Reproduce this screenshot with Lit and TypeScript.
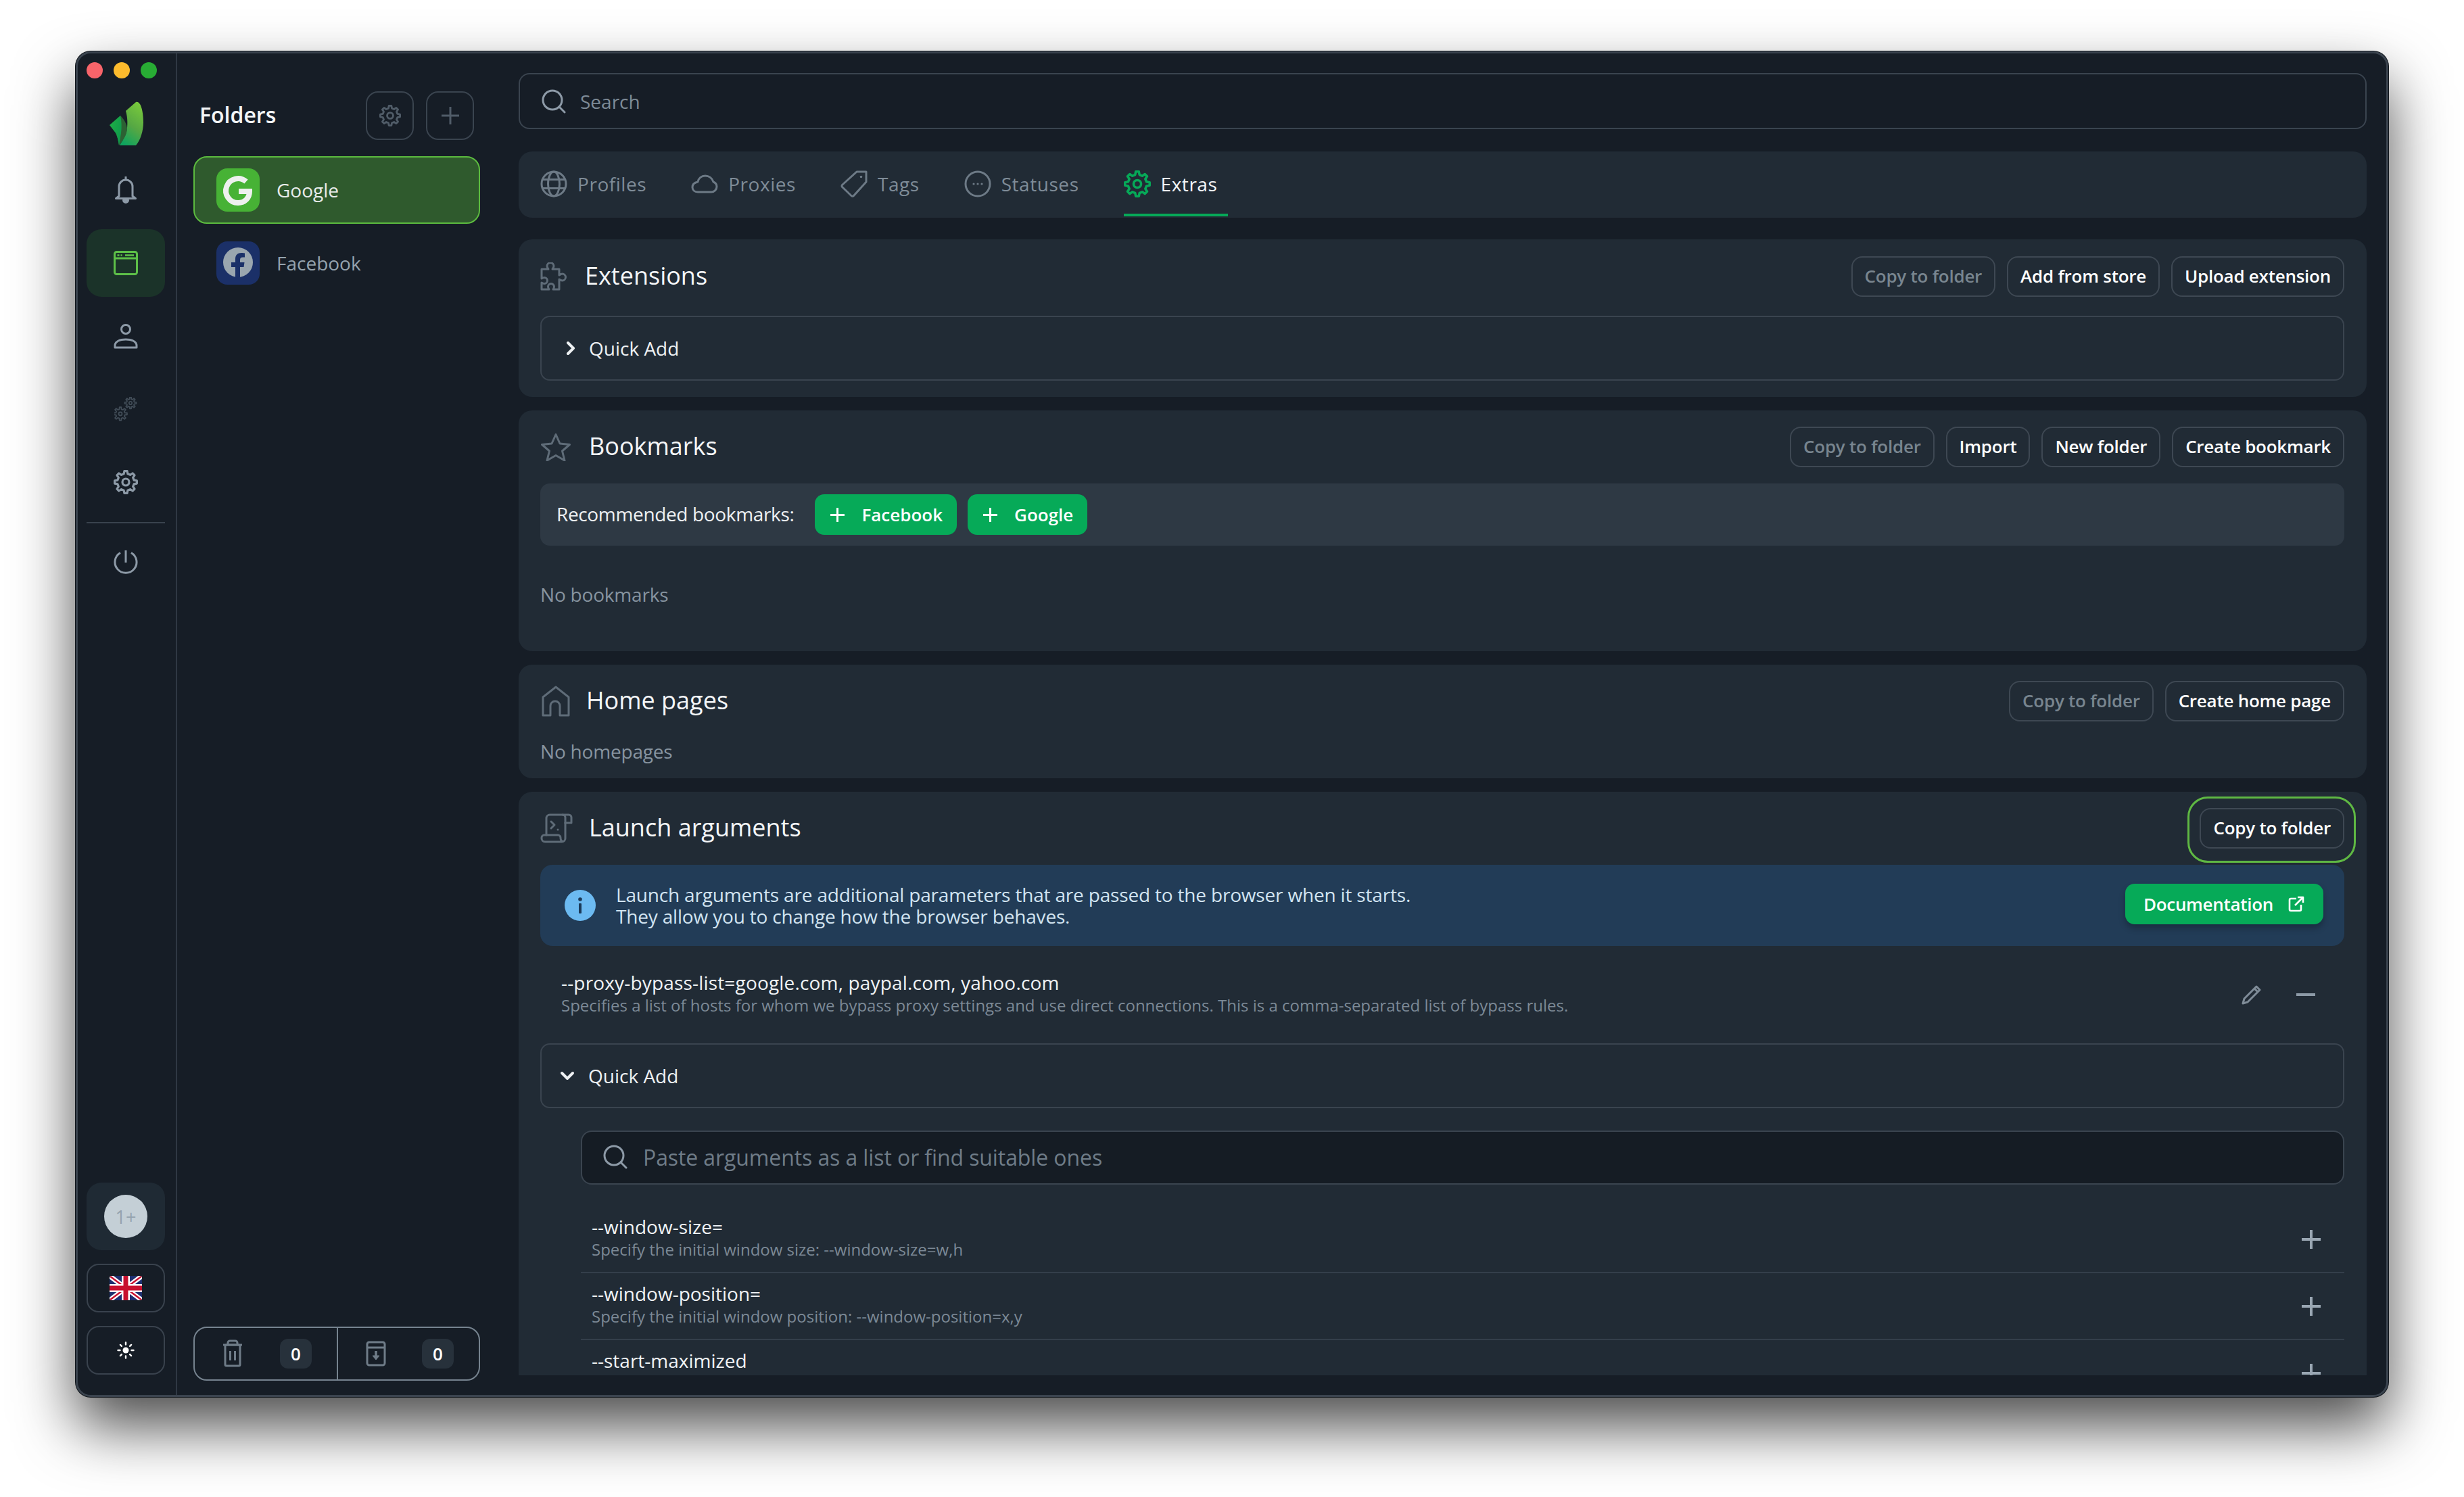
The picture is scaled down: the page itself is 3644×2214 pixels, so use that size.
import { LitElement, html, css } from 'lit';
import { customElement } from 'lit/decorators.js';
import { classMap } from 'lit/directives/class-map.js';

// cog outline, used by every gear icon in the app
function cog(cx: number, cy: number, ro: number, ri: number, teeth = 8) {
  const step = (Math.PI * 2) / teeth;
  let d = '';
  for (let i = 0; i < teeth; i++) {
    const a = i * step - Math.PI / 2;
    const pts: [number, number][] = [
      [ri, a - step * 0.3],
      [ro, a - step * 0.16],
      [ro, a + step * 0.16],
      [ri, a + step * 0.3],
    ];
    for (const [r, t] of pts) {
      d += `${i === 0 && t === pts[0][1] ? 'M' : 'L'}${(cx + r * Math.cos(t)).toFixed(2)} ${(cy + r * Math.sin(t)).toFixed(2)}`;
    }
  }
  return d + 'Z';
}

const gearIcon = (size: number) => html`<svg class="ic" width=${size} height=${size} viewBox="0 0 36 36" fill="none" stroke="currentColor" stroke-width="3.200" stroke-linejoin="round">
  <path d=${cog(18, 18, 16.5, 12.5)}></path><circle cx="18" cy="18" r="5"></circle>
</svg>`;

const plusIcon = (size: number, sw: number) => html`<svg class="ic" width=${size} height=${size} viewBox="0 0 ${size} ${size}" fill="none" stroke="currentColor" stroke-width=${sw}>
  <path d="M${size / 2} 0V${size}M0 ${size / 2}H${size}"></path>
</svg>`;

const searchIcon = (size: number) => html`<svg class="ic" width=${size} height=${size} viewBox="0 0 36 36" fill="none" stroke="currentColor" stroke-width="3" stroke-linecap="round">
  <circle cx="16" cy="16" r="14"></circle><path d="M26 26l8 8"></path>
</svg>`;

const chevronRight = html`<svg class="ic" width="14" height="22" viewBox="0 0 14 22" fill="none" stroke="currentColor" stroke-width="4" stroke-linecap="round" stroke-linejoin="round"><path d="M3 3l8 8-8 8"></path></svg>`;
const chevronDown = html`<svg class="ic" width="22" height="14" viewBox="0 0 22 14" fill="none" stroke="currentColor" stroke-width="4" stroke-linecap="round" stroke-linejoin="round"><path d="M3 3l8 8 8-8"></path></svg>`;

const navIcons = {
  bell: html`<svg class="ic" width="34" height="42" viewBox="0 0 34 42" fill="none" stroke="currentColor" stroke-width="3" stroke-linejoin="round">
    <path d="M17 1v4"></path><path d="M7 30V16a10 10 0 0 1 20 0v14l4.500 3.500H2.500z"></path><path d="M13.500 36a3.500 3.500 0 0 0 7 0z" fill="currentColor"></path>
  </svg>`,
  browser: html`<svg class="ic" width="36" height="36" viewBox="0 0 36 36" fill="none" stroke="currentColor" stroke-width="3">
    <rect x="1.500" y="1.500" width="33" height="33" rx="3"></rect><path d="M2 11h32"></path><path d="M5.500 6.500h3M10.500 6.500h2M17 6.500h13" stroke-width="2.500"></path>
  </svg>`,
  person: html`<svg class="ic" width="36" height="38" viewBox="0 0 36 38" fill="none" stroke="currentColor" stroke-width="3" stroke-linejoin="round">
    <circle cx="18" cy="9" r="6.500"></circle><path d="M2 36v-3c0-6 7-9 16-9s16 3 16 9v3z"></path>
  </svg>`,
  gears: html`<svg class="ic" width="34" height="36" viewBox="0 0 34 36" fill="none" stroke="currentColor" stroke-width="1.800" stroke-linejoin="round">
    <path d=${cog(24, 9, 8.5, 5.8)}></path><circle cx="24" cy="9" r="2.200"></circle>
    <path d=${cog(9, 25, 10, 6.800)}></path><circle cx="9" cy="25" r="2.500"></circle>
  </svg>`,
  gear: gearIcon(36),
  power: html`<svg class="ic" width="36" height="38" viewBox="0 0 36 38" fill="none" stroke="currentColor" stroke-width="3">
    <path d="M18 1v18"></path><path d="M10 4.500A16 16 0 1 0 26 4.500"></path>
  </svg>`,
};

const logo = html`<svg width="54" height="68" viewBox="0 0 54 68">
  <defs>
    <linearGradient id="lg1" x1="0.7" y1="0" x2="0.3" y2="1">
      <stop offset="0" stop-color="#78c83c"></stop><stop offset="0.55" stop-color="#55a744"></stop><stop offset="1" stop-color="#0fa45e"></stop>
    </linearGradient>
    <linearGradient id="lg2" x1="0" y1="0.2" x2="1" y2="0.8">
      <stop offset="0" stop-color="#1fae45"></stop><stop offset="1" stop-color="#0d9a4c"></stop>
    </linearGradient>
  </defs>
  <path fill="url(#lg1)" d="M41 2L26 15C29 25 29 38 27 46C25 54 20 60 17 66L41 66C48 58 52 44 52 32C52 20 50 10 47 5C45 2 43 1 41 2Z"></path>
  <path fill="#2c6233" d="M18 22C24 28 28 35 28 42C27 52 21 60 16 66C15 58 13 52 11 48Z"></path>
  <path fill="url(#lg2)" d="M18 22L2 36L12 49C14 55 15 60 16 66C17 60 18 54 19 48C20 40 20 30 18 22Z"></path>
</svg>`;

const flag = html`<svg class="flag" width="48" height="36" viewBox="0 0 48 36">
  <rect width="48" height="36" fill="#1d2f6f"></rect>
  <path d="M0 0L48 36M48 0L0 36" stroke="#fff" stroke-width="7"></path>
  <path d="M0 0L48 36M48 0L0 36" stroke="#c8102e" stroke-width="2.500"></path>
  <path d="M24 0V36M0 18H48" stroke="#fff" stroke-width="12"></path>
  <path d="M24 0V36M0 18H48" stroke="#c8102e" stroke-width="7"></path>
</svg>`;

const sun = html`<svg class="ic" width="26" height="26" viewBox="0 0 26 26" fill="#fff" stroke="#fff" stroke-width="2.400" stroke-linecap="round">
  <circle cx="13" cy="13" r="4.500" stroke="none"></circle>
  <path d="M13 1.500v3M13 21.500v3M1.500 13h3M21.500 13h3M4.900 4.900l2 2M19.100 19.100l2 2M21.100 4.900l-2 2M6.900 19.100l-2 2"></path>
</svg>`;

const trash = html`<svg class="ic" width="30" height="42" viewBox="0 0 30 42" fill="none" stroke="currentColor" stroke-width="3" stroke-linejoin="round">
  <path d="M1 8h28"></path><path d="M8 8V5a3 3 0 0 1 3-3h8a3 3 0 0 1 3 3v3"></path><rect x="4" y="8" width="22" height="31" rx="2"></rect><path d="M11.500 17v14M18.500 17v14"></path>
</svg>`;

const archive = html`<svg class="ic" width="30" height="38" viewBox="0 0 30 38" fill="none" stroke="currentColor" stroke-width="3" stroke-linejoin="round">
  <rect x="2" y="2" width="26" height="34" rx="3"></rect><path d="M2 10h26"></path><path d="M15 15v9" stroke-width="3.500"></path><path d="M10 22h10l-5 6z" fill="currentColor" stroke-width="1"></path>
</svg>`;

const tabIcons = {
  globe: html`<svg class="ic" width="40" height="40" viewBox="0 0 40 40" fill="none" stroke="currentColor" stroke-width="3"><circle cx="20" cy="20" r="18"></circle><ellipse cx="20" cy="20" rx="8.500" ry="18"></ellipse><path d="M3.500 13.500h33M3.500 26.500h33"></path></svg>`,
  cloud: html`<svg class="ic" width="40" height="28" viewBox="0 0 40 28" fill="none" stroke="currentColor" stroke-width="3" stroke-linejoin="round"><path d="M10 26H30a8 8 0 0 0 8-8c0-3-1.500-5.500-5-7C31 5 26 2 21 2C15 2 11 6 10 11C5 12 2 15 2 19c0 4 3 7 8 7Z"></path></svg>`,
  tag: html`<svg class="ic" width="40" height="40" viewBox="0 0 40 40" fill="none" stroke="currentColor" stroke-width="3" stroke-linejoin="round"><path d="M38 2H24L2.500 21.500Q1.500 23 2.500 24.500L16 37.500Q18 39 19.500 37.500L38 17Z"></path><circle cx="30.500" cy="9.500" r="1.800" fill="currentColor" stroke="none"></circle></svg>`,
  dots: html`<svg class="ic" width="40" height="40" viewBox="0 0 40 40" fill="none" stroke="currentColor" stroke-width="3"><circle cx="20" cy="20" r="18"></circle><g fill="currentColor" stroke="none"><circle cx="14" cy="20" r="1.600"></circle><circle cx="20" cy="20" r="1.600"></circle><circle cx="26" cy="20" r="1.600"></circle></g></svg>`,
  gear: gearIcon(40),
};

const cardIcons = {
  puzzle: html`<svg class="ic" width="42" height="42" viewBox="0 0 42 42" fill="none" stroke="currentColor" stroke-width="3" stroke-linejoin="round"><path d="M2 10h10c-1-1.500-2-3-2-4.500a5 5 0 0 1 10 0c0 1.500-1 3-2 4.500h10v9c1.500-1 3-2 4.500-2a5 5 0 0 1 0 10c-1.500 0-3-1-4.500-2v15h-9c1-1.500 1.500-2.500 1.500-4a4.500 4.500 0 0 0-9 0c0 1.500.5 2.500 1.500 4H2v-10c1.500 1 2.500 1.500 4 1.500a4.500 4.500 0 0 0 0-9c-1.500 0-2.500.5-4 1.500z"></path></svg>`,
  star: html`<svg class="ic" width="48" height="42" viewBox="0 0 48 42" fill="none" stroke="currentColor" stroke-width="3" stroke-linejoin="round"><path d="M23 2.500l6 13.500 14.500 1.500-11 9.500 3.500 14-13-7.500-13 7.500 3.500-14-11-9.500L17 16z"></path></svg>`,
  house: html`<svg class="ic" width="44" height="46" viewBox="0 0 44 46" fill="none" stroke="currentColor" stroke-width="3" stroke-linejoin="round"><path d="M4 44H15V30a7 7 0 0 1 14 0V44H42V17L23 2L4 17Z"></path></svg>`,
  scroll: html`<svg class="ic" width="48" height="44" viewBox="0 0 48 44" fill="none" stroke="currentColor" stroke-width="3" stroke-linejoin="round" stroke-linecap="round">
    <path d="M9 32V7a5 5 0 0 1 5-5h28a4 4 0 0 1 4 4v8H37"></path><path d="M37 14V6a4 4 0 0 0-4-4"></path><path d="M37 14v23a5 5 0 0 1-5 5H7a5 5 0 0 1-5-5v-1a4 4 0 0 1 4-4h20a4 4 0 0 1 4 4v1a5 5 0 0 0 2 4"></path><path d="M16 12l5 5-5 5"></path><circle cx="26" cy="24" r="1.500" fill="currentColor" stroke="none"></circle>
  </svg>`,
};

const infoIcon = html`<svg class="ic" width="46" height="46" viewBox="0 0 46 46"><circle cx="23" cy="23" r="23" fill="#6cbaf1"></circle><circle cx="23" cy="14" r="2.800" fill="#1c3a58"></circle><rect x="21" y="20" width="4" height="15" rx="1" fill="#1c3a58"></rect></svg>`;
const extLink = html`<svg class="ic" width="24" height="24" viewBox="0 0 24 24" fill="none" stroke="currentColor" stroke-width="2.600" stroke-linejoin="round"><path d="M12 4H4a2 2 0 0 0-2 2v14a2 2 0 0 0 2 2h13a2 2 0 0 0 2-2v-7"></path><path d="M10 14L22 2M14 2h8v8"></path></svg>`;
const pencil = html`<svg class="ic" width="30" height="30" viewBox="0 0 30 30" fill="none" stroke="currentColor" stroke-width="3" stroke-linejoin="round"><path d="M22 3l5 5L9 26l-7 2 2-7z"></path><path d="M19 6l5 5"></path></svg>`;

const googleGlyph = html`<svg width="64" height="64" viewBox="0 0 64 64"><rect width="64" height="64" rx="16" fill="#47b235"></rect><path d="M44 19.500A18 18 0 1 0 32 51c10 0 17-7 17-17H33" fill="none" stroke="#eef1ee" stroke-width="8"></path></svg>`;
const facebookGlyph = html`<svg width="64" height="64" viewBox="0 0 64 64"><rect width="64" height="64" rx="16" fill="#1b3068"></rect><circle cx="32" cy="31" r="22" fill="#9aa6af"></circle><path fill="#1b3068" d="M28 53V38h-6v-7h6v-5c0-6 3.500-9 9-9 2 0 4 .3 5 .5v6h-3c-3 0-4 1.500-4 4v3.500h6.500l-1 7H35v15z"></path></svg>`;

const tabs = [
  { icon: tabIcons.globe, label: 'Profiles' },
  { icon: tabIcons.cloud, label: 'Proxies' },
  { icon: tabIcons.tag, label: 'Tags' },
  { icon: tabIcons.dots, label: 'Statuses' },
  { icon: tabIcons.gear, label: 'Extras', active: true },
];

const quickArgs = [
  { name: '--window-size=', desc: 'Specify the initial window size: --window-size=w,h' },
  { name: '--window-position=', desc: 'Specify the initial window position: --window-position=x,y' },
  { name: '--start-maximized', desc: '' },
];

@customElement('app-root')
class AppRoot extends LitElement {
  static styles = css`
    :host {
      display: block;
      box-sizing: border-box;
      width: 3644px;
      height: 2214px;
      padding: 76px 112px 148px;
      background: #fff;
      overflow: hidden;
      font-family: 'Open Sans', 'Noto Sans', sans-serif;
      font-size: 28px;
      color: #e8ecef;
    }
    * { box-sizing: border-box; }
    .ic { display: block; flex: none; }

    .window {
      display: flex;
      height: 100%;
      background: #161d26;
      border: 3px solid #3a434e;
      border-radius: 22px;
      box-shadow: 0 0 0 1px #0f141a, 0 44px 88px rgba(0, 0, 0, 0.7);
      overflow: hidden;
    }

    /* rail */
    .rail {
      flex: none;
      width: 147px;
      display: flex;
      flex-direction: column;
      padding: 13px 0 30px 13px;
      border-right: 2px solid #2f3843;
    }
    .lights { display: flex; gap: 16px; height: 24px; }
    .lights span { width: 24px; height: 24px; border-radius: 50%; }
    .red { background: #f8646a; }
    .yellow { background: #fdbb2d; }
    .green { background: #28ac34; }
    .logo { height: 68px; margin: 33px 0 14px 32px; }
    .nav-item {
      width: 116px;
      height: 100px;
      margin-bottom: 8px;
      border-radius: 22px;
      display: flex;
      align-items: center;
      justify-content: center;
      color: #8d9aa7;
    }
    .nav-item.active { background: #1b3329; color: #5dc048; }
    .nav-item.dim { color: #414c57; }
    .rail-sep { width: 116px; height: 2px; background: #39424d; margin: 1px 0 8px; }
    .rail-bottom { margin-top: auto; display: flex; flex-direction: column; }
    .avatar-box {
      width: 116px;
      height: 100px;
      border-radius: 22px;
      background: #1f2a34;
      display: flex;
      align-items: center;
      justify-content: center;
    }
    .avatar {
      width: 64px;
      height: 64px;
      border-radius: 50%;
      background: #c4cfd6;
      color: #94a2ae;
      display: flex;
      align-items: center;
      justify-content: center;
      font-size: 27px;
    }
    .rail-btn {
      width: 116px;
      height: 72px;
      margin-top: 20px;
      border: 2px solid #39424d;
      border-radius: 18px;
      display: flex;
      align-items: center;
      justify-content: center;
    }
    .flag { border-radius: 3px; }

    /* folders */
    .folders {
      flex: none;
      width: 448px;
      padding: 56px 0 21px 24px;
      display: flex;
      flex-direction: column;
    }
    .folders-head {
      display: flex;
      align-items: center;
      height: 72px;
      padding: 0 9px;
      margin-bottom: 24px;
      gap: 18px;
    }
    .folders-title { flex: 1; font-size: 32px; line-height: 40px; margin-top: -3px; font-weight: 600; color: #f4f6f8; }
    .square-btn {
      width: 71px;
      height: 72px;
      border: 2px solid #3a444f;
      border-radius: 18px;
      display: flex;
      align-items: center;
      justify-content: center;
      color: #505c68;
    }
    .folder {
      height: 100px;
      margin-bottom: 8px;
      padding-left: 32px;
      display: flex;
      align-items: center;
      gap: 25px;
      border: 2px solid transparent;
      border-radius: 20px;
      color: #94a3ae;
    }
    .folder svg { display: block; flex: none; }
    .folder.active { background: #2f5a2d; border-color: #5cbb3f; color: #e8ecea; }
    .trash-bar {
      margin-top: auto;
      height: 80px;
      display: grid;
      grid-template-columns: 1fr 1fr;
      border: 2px solid #76838f;
      border-radius: 20px;
      color: #6f7c88;
    }
    .trash-cell {
      display: flex;
      align-items: center;
      justify-content: space-between;
      padding: 0 37px 0 41px;
    }
    .trash-cell + .trash-cell { border-left: 2px solid #76838f; }
    .count {
      width: 47px;
      height: 44px;
      border-radius: 12px;
      background: #27313b;
      color: #fff;
      font-size: 26px;
      font-weight: 600;
      display: flex;
      align-items: center;
      justify-content: center;
    }

    /* main column */
    .main {
      flex: none;
      width: 2733px;
      margin-left: 57px;
      padding: 29px 0;
      display: flex;
      flex-direction: column;
      min-height: 0;
    }
    .search {
      flex: none;
      height: 83px;
      padding: 0 32px;
      display: flex;
      align-items: center;
      gap: 21px;
      border: 2px solid #3a444f;
      border-radius: 16px;
      color: #7e8b97;
    }
    .search svg { color: #8d9aa7; }
    .tabs {
      flex: none;
      height: 98px;
      margin: 33px 0 32px;
      padding-left: 32px;
      display: flex;
      gap: 50px;
      background: #212b35;
      border-radius: 20px;
    }
    .tab {
      display: flex;
      align-items: center;
      gap: 15px;
      padding: 3px 16px 0 0;
      height: 96px;
      font-weight: 500;
      letter-spacing: 0.55px;
      color: #7f8c98;
      border-bottom: 4px solid transparent;
    }
    .tab svg { color: #6d7a86; }
    .tab.active { color: #f4f6f8; border-bottom-color: #06a958; }
    .tab.active svg { color: #06a958; }

    .scroll {
      flex: 1;
      min-height: 0;
      overflow: hidden;
      display: flex;
      flex-direction: column;
      gap: 20px;
    }
    .card {
      flex: none;
      background: #212b35;
      border-radius: 20px;
      padding: 24px 33px 24px 32px;
    }
    .card.ext { padding-top: 25px; }
    .card.ext .card-head { margin-bottom: 28px; }
    .card.home { padding-bottom: 20px; }
    .card-head {
      display: flex;
      align-items: center;
      height: 60px;
      margin-bottom: 24px;
      color: #5f6c78;
    }
    .card-title { margin-left: 24px; font-size: 36px; line-height: 48px; margin-top: -2px; color: #f4f6f8; flex: 1; }
    .actions { display: flex; gap: 17px; }
    .btn {
      height: 60px;
      padding: 0 18px 2px;
      display: flex;
      align-items: center;
      border: 2px solid #3e4853;
      border-radius: 16px;
      font-size: 26px;
      font-weight: 600;
      letter-spacing: -0.25px;
      color: #fff;
      white-space: nowrap;
    }
    .btn.off { color: #78858f; }
    .ring {
      margin: -17px -17px -21px 0;
      padding: 14px 14px 18px 15px;
      border: 3px solid #5fb843;
      border-radius: 30px;
    }
    .quick {
      height: 96px;
      border: 2px solid #3a444f;
      border-radius: 14px;
      display: flex;
      align-items: center;
      padding-left: 36px;
      gap: 20px;
      color: #eef1f3;
    }
    .quick.open { padding-left: 27px; gap: 20px; }
    .recommended {
      height: 92px;
      padding: 0 24px 2px;
      display: flex;
      align-items: center;
      gap: 16px;
      background: #2e3944;
      border-radius: 14px;
    }
    .recommended .label { margin-right: 15px; letter-spacing: -0.35px; color: #eef1f3; }
    .recommended .btn-green { margin-bottom: -2px; }
    .btn-green {
      height: 60px;
      padding: 0 21px 0 23px;
      display: flex;
      align-items: center;
      gap: 25px;
      background: #06aa58;
      border-radius: 14px;
      color: #fff;
      font-size: 26px;
      font-weight: 600;
    }
    .empty { color: #8794a0; line-height: 40px; letter-spacing: -0.2px; }
    .bookmarks-empty { margin-top: 52px; padding-bottom: 40px; }
    .info {
      height: 120px;
      padding: 0 31px 0 36px;
      display: flex;
      align-items: center;
      gap: 30px;
      background: #223c57;
      border-radius: 18px;
      line-height: 32px;
      letter-spacing: -0.18px;
      color: #d2e4f1;
    }
    .info-text { flex: 1; }
    .btn-doc {
      gap: 22px;
      margin-top: -4px;
      padding: 0 28px 0 27px;
      letter-spacing: -0.3px;
      box-shadow: 0 6px 10px rgba(0, 0, 0, 0.25);
    }
    .arg {
      height: 144px;
      padding: 0 43px 0 31px;
      display: flex;
      align-items: center;
    }
    .arg-text { flex: 1; }
    .arg-name { line-height: 36px; color: #f0f3f5; }
    .arg > .arg-text { margin-top: -7px; }
    .arg > .arg-text .arg-name { letter-spacing: 0.17px; margin-bottom: 2px; }
    .arg-desc { line-height: 28px; font-size: 24px; color: #7c8996; }
    .arg-tools { display: flex; align-items: center; gap: 51px; color: #7f8c98; }
    .minus { width: 28px; height: 4px; background: #8d9aa7; }
    .args-search {
      height: 80px;
      margin: 33px 0 32px 60px;
      padding: 0 31px 2px;
      display: flex;
      align-items: center;
      gap: 23px;
      background: #151c24;
      border: 2px solid #3a444f;
      border-radius: 16px;
      font-size: 32px;
      letter-spacing: -0.1px;
      color: #6f7c88;
    }
    .args-search svg { color: #8d9aa7; }
    .arg-list { margin-left: 60px; }
    .arg-row {
      height: 99px;
      padding: 12px 35px 0 16px;
      display: flex;
      align-items: flex-start;
      border-bottom: 2px solid #343f4a;
      color: #9aa7b3;
    }
    .arg-row:last-child { border-bottom: none; }
    .arg-row .arg-desc { line-height: 30px; margin-top: 1px; }
    .arg-row svg { margin-top: 23px; }
  `;

  private _renderNav() {
    const items = [
      { icon: navIcons.bell },
      { icon: navIcons.browser, active: true },
      { icon: navIcons.person },
      { icon: navIcons.gears, dim: true },
      { icon: navIcons.gear },
    ];
    return items.map(
      (i) => html`<div class=${classMap({ 'nav-item': true, active: !!i.active, dim: !!i.dim })}>${i.icon}</div>`,
    );
  }

  private _renderRail() {
    return html`<aside class="rail">
      <div class="lights"><span class="red"></span><span class="yellow"></span><span class="green"></span></div>
      <div class="logo">${logo}</div>
      ${this._renderNav()}
      <div class="rail-sep"></div>
      <div class="nav-item">${navIcons.power}</div>
      <div class="rail-bottom">
        <div class="avatar-box"><div class="avatar">1+</div></div>
        <div class="rail-btn">${flag}</div>
        <div class="rail-btn">${sun}</div>
      </div>
    </aside>`;
  }

  private _renderFolders() {
    return html`<section class="folders">
      <div class="folders-head">
        <div class="folders-title">Folders</div>
        <div class="square-btn">${gearIcon(32)}</div>
        <div class="square-btn">${plusIcon(26, 3)}</div>
      </div>
      <div class="folder active">${googleGlyph}<span>Google</span></div>
      <div class="folder">${facebookGlyph}<span>Facebook</span></div>
      <div class="trash-bar">
        <div class="trash-cell">${trash}<span class="count">0</span></div>
        <div class="trash-cell">${archive}<span class="count">0</span></div>
      </div>
    </section>`;
  }

  private _btn(label: string, off = false) {
    return html`<div class=${classMap({ btn: true, off })}>${label}</div>`;
  }

  private _renderCards() {
    return html`<div class="scroll">
      <section class="card ext">
        <div class="card-head">
          ${cardIcons.puzzle}
          <div class="card-title">Extensions</div>
          <div class="actions">${this._btn('Copy to folder', true)}${this._btn('Add from store')}${this._btn('Upload extension')}</div>
        </div>
        <div class="quick">${chevronRight}<span>Quick Add</span></div>
      </section>

      <section class="card">
        <div class="card-head">
          ${cardIcons.star}
          <div class="card-title">Bookmarks</div>
          <div class="actions">${this._btn('Copy to folder', true)}${this._btn('Import')}${this._btn('New folder')}${this._btn('Create bookmark')}</div>
        </div>
        <div class="recommended">
          <span class="label">Recommended bookmarks:</span>
          <div class="btn-green">${plusIcon(21, 3)}Facebook</div>
          <div class="btn-green">${plusIcon(21, 3)}Google</div>
        </div>
        <div class="empty bookmarks-empty">No bookmarks</div>
      </section>

      <section class="card home">
        <div class="card-head">
          ${cardIcons.house}
          <div class="card-title">Home pages</div>
          <div class="actions">${this._btn('Copy to folder', true)}${this._btn('Create home page')}</div>
        </div>
        <div class="empty">No homepages</div>
      </section>

      <section class="card">
        <div class="card-head">
          ${cardIcons.scroll}
          <div class="card-title">Launch arguments</div>
          <div class="ring">${this._btn('Copy to folder')}</div>
        </div>
        <div class="info">
          ${infoIcon}
          <div class="info-text">Launch arguments are additional parameters that are passed to the browser when it starts.<br />They allow you to change how the browser behaves.</div>
          <div class="btn-green btn-doc">Documentation ${extLink}</div>
        </div>
        <div class="arg">
          <div class="arg-text">
            <div class="arg-name">--proxy-bypass-list=google.com, paypal.com, yahoo.com</div>
            <div class="arg-desc">Specifies a list of hosts for whom we bypass proxy settings and use direct connections. This is a comma-separated list of bypass rules.</div>
          </div>
          <div class="arg-tools">${pencil}<div class="minus"></div></div>
        </div>
        <div class="quick open">${chevronDown}<span>Quick Add</span></div>
        <div class="args-search">${searchIcon(36)}<span>Paste arguments as a list or find suitable ones</span></div>
        <div class="arg-list">
          ${quickArgs.map(
            (a) => html`<div class="arg-row">
              <div class="arg-text">
                <div class="arg-name">${a.name}</div>
                ${a.desc ? html`<div class="arg-desc">${a.desc}</div>` : ''}
              </div>
              ${plusIcon(28, 4)}
            </div>`,
          )}
        </div>
      </section>
    </div>`;
  }

  protected render() {
    return html`<div class="window">
      ${this._renderRail()}
      ${this._renderFolders()}
      <main class="main">
        <div class="search">${searchIcon(36)}<span>Search</span></div>
        <nav class="tabs">
          ${tabs.map(
            (t) => html`<div class=${classMap({ tab: true, active: !!t.active })}>${t.icon}<span>${t.label}</span></div>`,
          )}
        </nav>
        ${this._renderCards()}
      </main>
    </div>`;
  }
}
